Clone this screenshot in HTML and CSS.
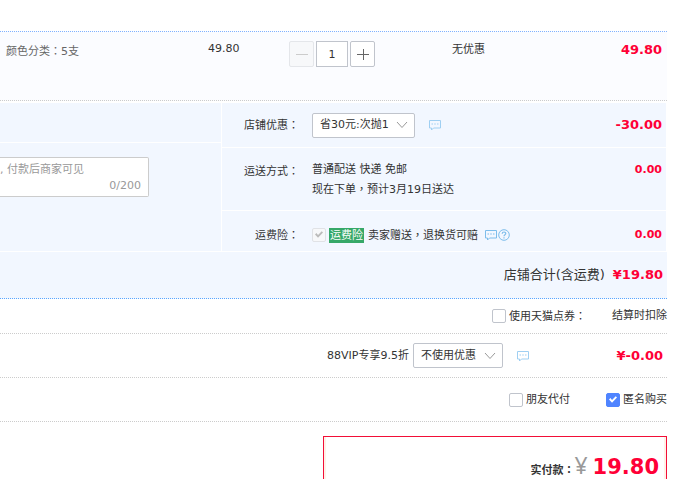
FILE: index.html
```html
<!DOCTYPE html>
<html lang="zh-CN">
<head>
<meta charset="utf-8">
<title>确认订单</title>
<link rel="stylesheet" href="styles.css">
</head>
<body>
<svg class="sprite" width="0" height="0">
  <symbol id="chat" viewBox="0 0 12 12">
    <path d="M.5 1.500h11v7.500h-7L2.500 11V9H.5z" fill="none" stroke="currentColor"/>
    <path d="M2.500 5h1.500M5.250 5h1.500M8 5h1.500" stroke="currentColor"/>
  </symbol>
  <symbol id="help" viewBox="0 0 12 12">
    <circle cx="6" cy="6" r="5.300" fill="none" stroke="currentColor"/>
    <path d="M4.200 4.800C4.200 2.400 7.900 2.500 7.800 4.600C7.800 5.800 6 5.800 6 7.300M6 8.300v1.200" fill="none" stroke="currentColor" stroke-width="1.200"/>
  </symbol>
  <symbol id="arrow" viewBox="0 0 12 8">
    <path d="M1 1l5 5.500L11 1" fill="none" stroke="currentColor"/>
  </symbol>
</svg>
<main class="order">
  <section class="item">
    <span class="sku">颜色分类<span class="mark" lang="zh-TW">：</span>5支</span>
    <span class="price">49.80</span>
    <div class="stepper">
      <button type="button" class="step" disabled aria-label="减少"><svg width="12" height="12"><path d="M0 6.500h12" stroke="currentColor"/></svg></button>
      <input class="qty" type="text" value="1" aria-label="数量">
      <button type="button" class="step" aria-label="增加"><svg width="12" height="12"><path d="M0 6.500h12M6.500 1v11" stroke="currentColor"/></svg></button>
    </div>
    <span class="promo">无优惠</span>
    <strong class="amount large">49.80</strong>
  </section>

  <section class="detail">
    <div class="note-side">
      <div class="cell blank"></div>
      <div class="cell note">
        <div class="note-box">
          <textarea rows="1" aria-label="留言" placeholder=", 付款后商家可见"></textarea>
          <span class="count">0/200</span>
        </div>
      </div>
    </div>
    <div class="options">
      <div class="cell option discount">
        <label class="name" for="shop">店铺优惠<span class="mark" lang="zh-TW">：</span></label>
        <div class="value">
          <span class="pick wide"><select id="shop"><option>省30元:次抛1</option></select><svg class="arrow"><use href="#arrow"/></svg></span>
          <svg class="icon spaced"><use href="#chat"/></svg>
        </div>
        <strong class="amount large">-30.00</strong>
      </div>
      <div class="cell option delivery">
        <span class="name">运送方式<span class="mark" lang="zh-TW">：</span></span>
        <div class="lines">
          <div>普通配送 快递 免邮</div>
          <div>现在下单<span class="mark" lang="zh-TW">，</span>预计3月19日送达</div>
        </div>
        <strong class="amount">0.00</strong>
      </div>
      <div class="cell option insurance">
        <span class="name">运费险<span class="mark" lang="zh-TW">：</span></span>
        <div class="value">
          <input class="tick" type="checkbox" id="ins" checked disabled>
          <label class="ins" for="ins"><span class="tag">运费险</span>卖家赠送<span class="mark" lang="zh-TW">，</span>退换货可赔</label>
          <span class="tips"><svg class="icon"><use href="#chat"/></svg><svg class="icon"><use href="#help"/></svg></span>
        </div>
        <strong class="amount">0.00</strong>
      </div>
    </div>
  </section>

  <section class="total">
    <span class="total-name">店铺合计(含运费)</span>
    <strong class="amount large">¥19.80</strong>
  </section>

  <section class="line coupon">
    <label class="check"><input class="tick" type="checkbox"><span>使用天猫点券<span class="mark" lang="zh-TW">：</span></span></label>
    <span>结算时扣除</span>
  </section>

  <section class="line vip">
    <label for="vip">88VIP专享9.5折</label>
    <span class="pick"><select id="vip"><option>不使用优惠</option></select><svg class="arrow"><use href="#arrow"/></svg></span>
    <svg class="icon spaced"><use href="#chat"/></svg>
    <strong class="amount large">¥-0.00</strong>
  </section>

  <section class="line extras">
    <label class="check"><input class="tick" type="checkbox">朋友代付</label>
    <label class="check"><input class="tick" type="checkbox" checked>匿名购买</label>
  </section>

  <section class="pay">
    <strong class="pay-name">实付款<span class="mark" lang="zh-TW">：</span></strong>
    <span class="yen">¥</span>
    <strong class="sum">19.80</strong>
  </section>
</main>
</body>
</html>
```

FILE: styles.css
```css
* { box-sizing: border-box; }

body {
  margin: 0;
  height: 100vh;
  overflow: hidden;
  background: #fff;
  color: #333;
  font: 11px/18px "DejaVu Sans", "Noto Sans CJK SC", sans-serif;
}

input, textarea, select, button { font: inherit; color: inherit; margin: 0; }

.sprite { position: absolute; }
.mark { font-family: "Noto Sans CJK TC", sans-serif; }
.order { padding: 31px 17px 0 0; }

.amount { color: #ff0036; font-weight: 700; text-align: right; }
.large { font-size: 13px; }

/* Product row */
.item {
  display: grid;
  grid-template-columns: 202fr 81fr 163fr 100fr 110fr;
  align-items: start;
  height: 70px;
  padding: 9px 5px 0 6px;
  border-top: 1px dotted #80b2ff;
  border-bottom: 1px dotted #ccc;
  background: #fbfcff;
}
.sku { color: #666; }
.item .price { line-height: 16px; }
.stepper { display: flex; gap: 2px; }
.step, .qty {
  width: 25px;
  height: 26px;
  padding: 0;
  border: 1px solid #c0c4cc;
  border-radius: 2px;
  background: #fff;
}
.step { display: grid; place-content: center; color: #666; }
.step:disabled { color: #ccc; background: #f7f8fa; border-color: #e4e6ea; }
.step svg { display: block; }
.qty { width: 32px; border-radius: 0; text-align: center; }

/* Note and shop options */
.detail {
  display: grid;
  grid-template-columns: 221fr 444fr;
  gap: 1px;
  margin: 2px 1px 1px 0;
}
.note-side, .options { display: flex; flex-direction: column; gap: 1px; }
.cell { background: #f2f7ff; }
.blank { height: 39px; }
.note { flex: 1; padding-top: 14px; }
.note-box {
  display: flex;
  flex-direction: column;
  width: 149px;
  height: 40px;
  padding: 3px 7px 2px 0;
  border: 1px solid #ccc;
  border-left: 0;
  border-radius: 0 2px 2px 0;
  background: #fff;
  color: #999;
  line-height: 16px;
}
.note-box textarea {
  width: 100%;
  height: 18px;
  padding: 0;
  border: 0;
  background: none;
  resize: none;
  overflow: hidden;
  line-height: 18px;
}
.note-box textarea::placeholder { color: #999; }
.count { text-align: right; }

.option {
  display: grid;
  grid-template-columns: 77px 1fr auto;
  column-gap: 13px;
  padding-right: 4px;
}
.name { text-align: right; }
.value { display: flex; align-items: center; }
.discount { height: 44px; align-items: center; }
.delivery { height: 62px; padding-top: 13px; align-items: start; }
.insurance { height: 40px; padding-top: 7px; align-items: center; }

.pick { display: inline-grid; align-items: center; width: 90px; }
.pick.wide { width: 103px; }
.pick > * { grid-area: 1 / 1; }
.pick select {
  appearance: none;
  width: 100%;
  height: 25px;
  padding: 0 7px;
  border: 1px solid #c0c4cc;
  border-radius: 2px;
  background: #fff;
}
.arrow {
  width: 12px;
  height: 8px;
  margin-right: 7px;
  justify-self: end;
  color: #999;
  pointer-events: none;
}
.icon { display: block; width: 12px; height: 12px; color: #9fcff2; }
.spaced { margin-left: 14px; }

.tick {
  appearance: none;
  display: grid;
  place-content: center;
  flex: none;
  width: 14px;
  height: 14px;
  border: 1px solid #c0c4cc;
  border-radius: 2px;
  background: #fff;
}
.tick:checked { border-color: #4f84ff; background: #4f84ff; }
.tick:checked::before {
  content: "";
  width: 8px;
  height: 8px;
  background: #fff;
  clip-path: polygon(0 50%, 18% 32%, 38% 55%, 84% 8%, 100% 26%, 38% 92%);
}
.tick:checked:disabled { border-color: #e0e2e6; background: #f7f8fa; }
.tick:checked:disabled::before { background: #bbb; }
.ins { margin-left: 3px; }
.tag {
  margin-right: 4px;
  padding: 0 1px;
  display: inline-block;
  line-height: 15px;
  background: #36a868;
  color: #fff;
}
.tips { display: flex; gap: 1px; margin-left: 7px; color: #7dbdeb; }
.tips .icon { color: inherit; }

/* Summary rows */
.total {
  display: flex;
  justify-content: flex-end;
  align-items: center;
  gap: 8px;
  height: 47px;
  padding-right: 4px;
  border-bottom: 1px dotted #59a6ff;
  background: #f2f7ff;
}
.total-name { font-size: 13px; }
.line {
  display: flex;
  justify-content: flex-end;
  align-items: center;
  height: 44px;
  border-bottom: 1px dotted #ccc;
}
.check { display: flex; align-items: center; gap: 3px; }
.coupon { height: 35px; gap: 26px; }
.vip { padding-right: 4px; }
.vip .pick { margin-left: 4px; }
.vip .amount { width: 134px; }
.extras { gap: 36px; }

.pay {
  display: flex;
  justify-content: flex-end;
  align-items: baseline;
  width: 344px;
  height: 60px;
  margin: 14px 0 0 auto;
  padding: 12px 7px 0 0;
  border: 1px solid #f20e37;
  box-shadow: inset 2px 0 #fff0e8, inset -2px 0 #fff0e8;
  line-height: 32px;
}
.pay-name { font-size: 11px; }
.yen {
  margin-right: 5px;
  font-family: "Noto Sans", sans-serif;
  font-size: 23px;
  color: #999;
}
.sum { font-size: 21px; color: #ff0036; }
```
